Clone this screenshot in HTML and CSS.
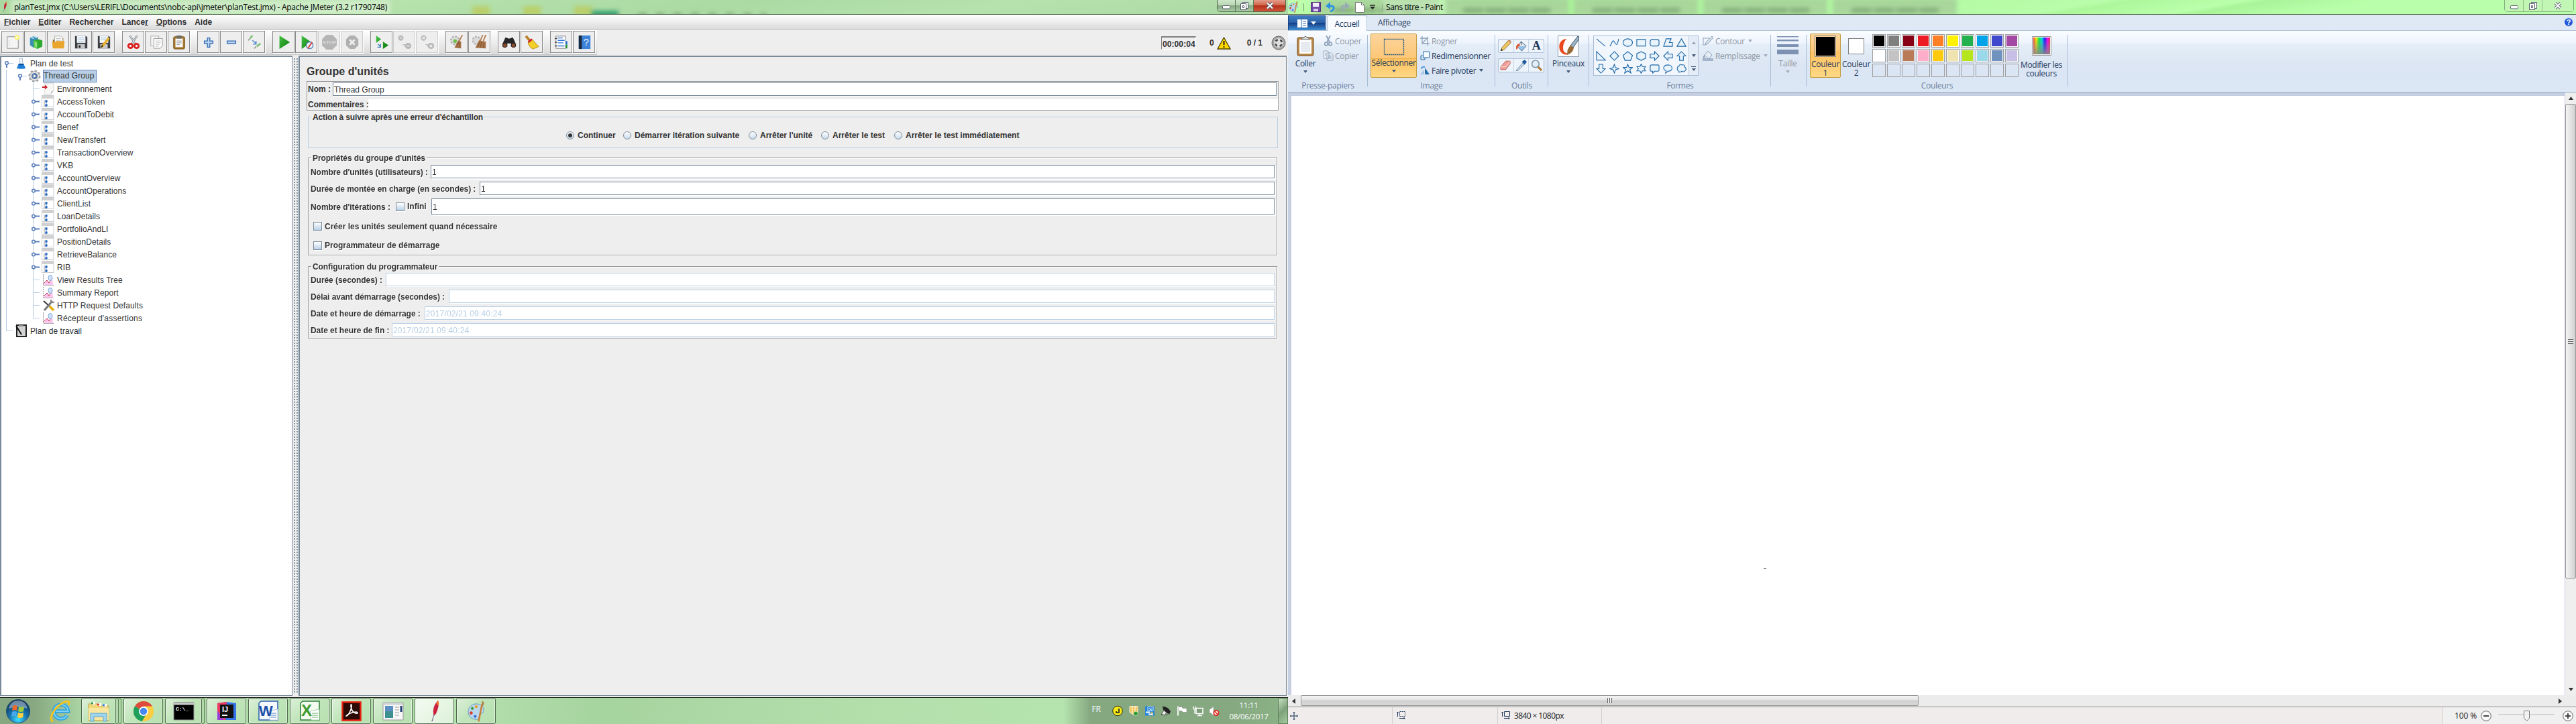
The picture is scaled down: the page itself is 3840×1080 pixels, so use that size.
FILE: index.html
```html
<!DOCTYPE html>
<html lang="fr">
<head>
<meta charset="utf-8">
<title>Apache JMeter / Paint</title>
<link rel="stylesheet" href="styles.css">
</head>
<body>
<svg width="0" height="0" class="defs">
  <defs>
    <linearGradient id="green" x1="0" x2="1" y1="0" y2="1"><stop offset="0" stop-color="#47c247"/><stop offset="1" stop-color="#087a08"/></linearGradient>
    <linearGradient id="hue"><stop offset="0" stop-color="#f33"/><stop offset=".17" stop-color="#fe0"/><stop offset=".35" stop-color="#0e4"/><stop offset=".52" stop-color="#0de"/><stop offset=".68" stop-color="#11f"/><stop offset=".85" stop-color="#f0e"/><stop offset="1" stop-color="#f24"/></linearGradient>
    <linearGradient id="fade" x2="0" y2="1"><stop offset="0" stop-color="#888" stop-opacity="0"/><stop offset="1" stop-color="#888" stop-opacity=".9"/></linearGradient>
    <radialGradient id="orb" cx=".5" cy=".85" r=".8"><stop offset="0" stop-color="#3fe0ff"/><stop offset=".45" stop-color="#1878b4"/><stop offset="1" stop-color="#0d3158"/></radialGradient>
  </defs>
  <symbol id="h-down" viewBox="0 0 20 19"><path d="M11 9.5h7" stroke="#b8cfe5"/><path d="M8 11v5" stroke="#5b7fbd" stroke-width="2"/><circle cx="8" cy="9" r="2.3" fill="#fff" stroke="#5b7fbd" stroke-width="1.6"/></symbol>
  <symbol id="h-right" viewBox="0 0 20 19"><path d="M10 9.5h7" stroke="#5b7fbd" stroke-width="2"/><circle cx="8" cy="9.5" r="2.3" fill="#fff" stroke="#5b7fbd" stroke-width="1.6"/></symbol>
  <symbol id="h-leaf" viewBox="0 0 20 19"><path d="M8 9.500h9" stroke="#b8cfe5"/></symbol>
  <symbol id="t-ctl" viewBox="0 0 20 19"><rect x=".5" y=".5" width="17.500" height="17" fill="#fff" stroke="#c9cdd2"/><path d="M1 3h17" stroke="#d0d0d0" stroke-width="4"/><path d="M4 7v9h2M4 11h2" stroke="#aaa" fill="none"/><circle cx="7" cy="9" r="1.900" fill="#2b6cc4"/><circle cx="7" cy="15" r="1.900" fill="#2b6cc4"/><circle cx="7" cy="12" r="1" fill="#9cc3f0"/></symbol>
  <symbol id="t-graph" viewBox="0 0 20 19"><path d="M2.500 1v16.500H18" stroke="#999" stroke-dasharray="2 1" fill="none"/><path d="M3 17l5-7 4 4 4-6 1 9z" fill="#fbc4ee"/><path d="M3 15l5-5 3 4 5-7" stroke="#c2344c" fill="none"/><ellipse cx="13" cy="6.500" rx="3" ry="4" fill="#cfe2f8" stroke="#7da7dc"/></symbol>
  <symbol id="f-flask" viewBox="0 0 20 19"><path d="M7.500 2h4v5l4 10h-12l4-10z" fill="#eef4fa" stroke="#a9bccd"/><path d="M5.500 11h8l2.500 6q-6 1.500-13 0z" fill="#1f7fd8"/><ellipse cx="9.500" cy="11" rx="4" ry="1.300" fill="#0e4d9a"/></symbol>
  <symbol id="f-gear" viewBox="0 0 20 19"><circle cx="9.500" cy="9.500" r="7.800" fill="none" stroke="#999" stroke-width="2.500" stroke-dasharray="3.300 2.800"/><circle cx="9.500" cy="9.500" r="7" fill="#e3e3e3" stroke="#a6a6a6"/><circle cx="9.500" cy="9.500" r="4.500" fill="#5677a8"/><path d="M8 7l4 2.500-4 2.500z" fill="#fff"/></symbol>
  <symbol id="f-env" viewBox="0 0 20 19"><path d="M4 1h14v11l-4 6H4z" fill="#f7f7f5" stroke="#d5d5d5"/><path d="M14 18q-1-6 4-6z" fill="#c6c6c6"/><path d="M1 7h4" stroke="#cc1f29" stroke-width="2"/><path d="M5 3.500v7L9 7z" fill="#cc1f29"/></symbol>
  <symbol id="f-tools" viewBox="0 0 20 19"><path d="M3 3l9 8" stroke="#333" stroke-width="2"/><path d="M16 3L4 17" stroke="#777" stroke-width="3"/><path d="M12 11l6 6" stroke="#e6b000" stroke-width="3.500"/><path d="M14 1v4h5" stroke="#888" stroke-width="2" fill="none"/></symbol>
  <symbol id="f-bench" viewBox="0 0 20 19"><path d="M3 1h14v17H3z" fill="#d2d2d2" stroke="#222" stroke-width="2"/><path d="M2 2l8 13" stroke="#111" stroke-width="2"/><path d="M6 2h7" stroke="#888" stroke-width="2"/></symbol>
  <symbol id="arr" viewBox="0 0 6 4"><path d="M0 0h6L3 4z" fill="currentColor"/></symbol>
  <symbol id="palette" viewBox="0 0 30 40"><path d="M15 7C5 7 0 15 1 23s9 13 17 11c5-2 1-6 4-9s7-1 6-8S22 7 15 7z" fill="#b9d8ee" stroke="#5a8fb5"/><circle cx="8" cy="15" r="2.500" fill="#3c9c3c"/><circle cx="15" cy="12" r="2.500" fill="#f0a020"/><circle cx="6" cy="23" r="2.800" fill="#d83c30"/><circle cx="13" cy="29" r="2.500" fill="#3c6cd8"/><path d="M25 8l-6 30" stroke="#c97f35" stroke-width="3"/><path d="M24 10l1-9 4 4-2 6z" fill="#b08850"/></symbol>
  <symbol id="feather" viewBox="0 0 20 40"><path d="M16 1q3 9-4 24l-4 2Q5 12 16 1z" fill="#c9213f"/><path d="M16 1q2 5 1 9l-4-3z" fill="#ee7b2a"/><path d="M9 26L5 38" stroke="#5b2a70" stroke-width="1.500" stroke-dasharray="2 1"/></symbol>
</svg>

<div class="desktop">
<div class="left-screen">
  <header class="jm-title">
    <span class="blur-items"><i class="b1"></i><i class="b1"></i><i class="b1"></i><i class="b2"></i><i class="b3"></i></span>
    <svg class="app" viewBox="0 0 20 40" width="12" height="17"><use href="#feather"/></svg>
    <span class="title-text">planTest.jmx (C:\Users\LERIFL\Documents\nobc-api\jmeter\planTest.jmx) - Apache JMeter (3.2 r1790748)</span>
    <span class="winbtns">
      <b class="wb"><svg width="12" height="6"><rect x=".5" y=".5" width="11" height="4.500" rx="1" fill="#fff" stroke="#555b6b"/></svg></b>
      <b class="wb"><svg width="12" height="12"><path d="M3.500.5h8v9h-8z" fill="#fff" stroke="#555b6b"/><path d="M.5 2.500h8v9h-8z" fill="#fff" stroke="#555b6b"/><path d="M3.500 5.500h2v3h-2z" fill="none" stroke="#555b6b"/></svg></b>
      <b class="wb close"><svg width="12" height="11"><path d="M2 1.500l8 8M10 1.500l-8 8" stroke="#555b6b" stroke-width="4"/><path d="M2 1.500l8 8M10 1.500l-8 8" stroke="#fff" stroke-width="2.200"/></svg></b>
    </span>
  </header>
  <nav class="menubar">
    <span><u>F</u>ichier</span><span><u>E</u>diter</span><span>Rechercher</span><span>Lance<u>r</u></span><span><u>O</u>ptions</span><span>Aide</span>
  </nav>
  <div class="toolbar">
    <div class="tools">
      <div class="tgroup">
        <button><svg viewBox="0 0 24 24"><path d="M3 3h18v19H3z" fill="#f4f4f4" stroke="#888"/><path d="M6 8v10" stroke="#bbb" stroke-dasharray="2 2"/><circle cx="19" cy="4" r="4" fill="#fdf27a"/><circle cx="19" cy="4" r="1.500" fill="#fff"/></svg></button>
        <button><svg viewBox="0 0 24 24"><path d="M3 5l6-3 7 2v15l-7 2-6-4z" fill="#3b8fb5"/><path d="M4 3l5 3M9 2l5 3" stroke="#c3e3ee" stroke-width="2"/><path d="M9 9l8-2 6 2v10l-8 4-6-3z" fill="#2ea82e"/><path d="M9 9l6 2v12l-6-3z" fill="#5fd04a"/><path d="M11 13l2 1v5" stroke="#fff" fill="none"/></svg></button>
        <button><svg viewBox="0 0 24 24"><path d="M3 8h4l1-3h12v14H3z" fill="#a8720c"/><path d="M6 2h10l3 3v11H6z" fill="#fafafa" stroke="#aaa"/><path d="M8 6h8M8 9h8" stroke="#bbb"/><path d="M2 12h5l1-2h14l-1 12H3z" fill="#e9a52c"/></svg></button>
        <button><svg viewBox="0 0 24 24"><path d="M2 2h18l2 2v18H2z" fill="#3b3f44"/><path d="M5 2h14v11H5z" fill="#f2f5f8"/><path d="M7 5h10M7 8h10M7 11h10" stroke="#9dc0df"/><path d="M6 15h12v7H6z" fill="#c6c8ca"/><path d="M8 17h3v4H8z" fill="#222"/></svg></button>
        <button><svg viewBox="0 0 24 24"><path d="M2 2h18l2 2v18H2z" fill="#3b3f44"/><path d="M5 2h14v11H5z" fill="#f2f5f8"/><path d="M7 5h10M7 8h10" stroke="#9dc0df"/><path d="M6 15h12v7H6z" fill="#c6c8ca"/><path d="M20 5L8 20" stroke="#e9b32b" stroke-width="4"/><path d="M9 16l-3 6 5-4z" fill="#222"/></svg></button>
      </div>
      <div class="tgroup">
        <button><svg viewBox="0 0 24 24"><path d="M6 1l9 14M18 1L9 15" stroke="#8d9297" stroke-width="3"/><path d="M6 1l9 14M18 1L9 15" stroke="#eee" stroke-width="1"/><circle cx="7" cy="18" r="3.500" fill="none" stroke="#dc1c1c" stroke-width="3"/><circle cx="17" cy="18" r="3.500" fill="none" stroke="#dc1c1c" stroke-width="3"/></svg></button>
        <button><svg viewBox="0 0 24 24"><path d="M3 2h13v16H3z" fill="#f5f5f5" stroke="#aaa"/><path d="M8 6h14v12l-4 4H8z" fill="#fafafa" stroke="#999"/><path d="M11 10h8M11 13h8M11 16h6M11 19h4" stroke="#c5c5c5"/></svg></button>
        <button><svg viewBox="0 0 24 24"><rect x="3" y="3" width="18" height="20" rx="2" fill="#a8782f" stroke="#6e4a10"/><path d="M6 6h12v14H6z" fill="#fafafa"/><path d="M8 10h8M8 13h8M8 16h5" stroke="#888"/><path d="M8 1h8v5H8z" fill="#6b6d66"/></svg></button>
      </div>
      <div class="tgroup">
        <button><svg viewBox="0 0 24 24"><path d="M10 5h4v5h5v4h-5v6h-4v-6H5v-4h5z" fill="#b9d3f2" stroke="#2f66ae" stroke-width="1.400"/></svg></button>
        <button><svg viewBox="0 0 24 24"><path d="M5 10h14v4H5z" fill="#b9d3f2" stroke="#2f66ae" stroke-width="1.400"/></svg></button>
        <button><svg viewBox="0 0 24 24"><path d="M2 9l3-3M12 22l3-3" stroke="#888" stroke-width="1.500"/><path d="M5 6l4-5M16 19l6-5" stroke="#83c27a" stroke-width="3"/><path d="M9 9l6 5M15 10v5h-5" stroke="#4a86d0" stroke-width="1.500" fill="none"/></svg></button>
      </div>
      <div class="tgroup">
        <button><svg viewBox="0 0 24 24"><path d="M5 1l17 11L5 23z" fill="url(#green)"/></svg></button>
        <button><svg viewBox="0 0 24 24"><path d="M4 1l16 11L4 23z" fill="url(#green)"/><circle cx="17" cy="17" r="5.500" fill="#e8f0f8" stroke="#5580b4" stroke-width="1.500"/><path d="M14 22l7-10" stroke="#d33" stroke-width="2"/></svg></button>
        <button class="off"><svg viewBox="0 0 24 24"><path d="M7 0h10l7 7v10l-7 7H7l-7-7V7z" fill="#b5b5b5"/><text x="12" y="15.500" text-anchor="middle" font-size="8.500" font-weight="bold" fill="#d8d8d8">STOP</text></svg></button>
        <button class="off"><svg viewBox="0 0 24 24"><path d="M8 1h8l6 6v10l-6 6H8l-6-6V7z" fill="#b0b0b0"/><path d="M8 8l8 8M16 8l-8 8" stroke="#eee" stroke-width="3"/></svg></button>
      </div>
      <div class="tgroup">
        <button><svg viewBox="0 0 24 24"><path d="M3 1l8 6-8 6zM14 11l9 6-9 6z" fill="url(#green)"/><path d="M6 15l4 4M10 15v5H5" stroke="#3a78b8" stroke-width="1.500" fill="none"/></svg></button>
        <button class="off"><svg viewBox="0 0 24 24"><circle cx="6" cy="5" r="4.500" fill="#bbb"/><circle cx="18" cy="18" r="5" fill="#b5b5b5"/><path d="M4 5h4M15 18h6" stroke="#ddd" stroke-width="2"/><path d="M9 16h4v4" stroke="#aaa" fill="none"/></svg></button>
        <button class="off"><svg viewBox="0 0 24 24"><circle cx="6" cy="5" r="4.500" fill="#bbb"/><circle cx="18" cy="18" r="5" fill="#b5b5b5"/><path d="M4 3l4 4M8 3L4 7M16 16l4 4M20 16l-4 4" stroke="#eee" stroke-width="1.500"/><path d="M9 16h4v4" stroke="#aaa" fill="none"/></svg></button>
      </div>
      <div class="tgroup">
        <button><svg viewBox="0 0 24 24"><circle cx="9" cy="9" r="6.500" fill="#ddd" stroke="#b5b5b5" stroke-width="3" stroke-dasharray="3 2"/><circle cx="9" cy="10" r="3" fill="#6cc04a"/><path d="M21 0l-5 10" stroke="#b58055" stroke-width="2"/><path d="M14 9l5 2v11l-11-1z" fill="#a9754a"/><path d="M15 12l-3 9M17 12l-1 9" stroke="#7b4d28"/></svg></button>
        <button><svg viewBox="0 0 24 24"><circle cx="7" cy="9" r="6" fill="#ddd" stroke="#b5b5b5" stroke-width="3" stroke-dasharray="3 2"/><path d="M17 0l-4 10M22 0l-4 10" stroke="#b58055" stroke-width="2"/><path d="M11 9l11 2v11l-17-1z" fill="#a9754a"/><path d="M12 12l-4 9M15 12l-2 9M19 12l-1 9" stroke="#7b4d28"/></svg></button>
      </div>
      <div class="tgroup">
        <button><svg viewBox="0 0 24 24"><path d="M6 4l5 2h2l5-2 5 11v4h-8v-5h-6v5H1v-4z" fill="#262626"/><circle cx="5" cy="17" r="3.500" fill="#8b4a28" stroke="#222"/><circle cx="19" cy="17" r="3.500" fill="#8b4a28" stroke="#222"/></svg></button>
        <button><svg viewBox="0 0 24 24"><path d="M2 2l8 9" stroke="#b9822b" stroke-width="4"/><path d="M6 12l6-5 11 12-9 4q-8-3-8-11z" fill="#f3cf2a" stroke="#b88b10"/><path d="M6 12l6-5" stroke="#d3202a" stroke-width="3"/></svg></button>
      </div>
      <div class="tgroup">
        <button><svg viewBox="0 0 24 24"><path d="M3 2h16v20H3z" fill="#fff" stroke="#777"/><path d="M6 5h8M6 9h11M6 13h9M6 18h11" stroke="#2b70d8" stroke-width="1.500"/><path d="M1 6h4M1 12h4M1 18h4" stroke="#444" stroke-width="1.500"/><path d="M20 10v6" stroke="#2a70c9" stroke-width="3"/><path d="M20 16v6" stroke="#24913a" stroke-width="3"/></svg></button>
        <button><svg viewBox="0 0 24 24"><path d="M3 1h19v22H3z" fill="#3c82d9"/><path d="M3 1h5v22H3z" fill="#1b2a3c"/><text x="15" y="17" text-anchor="middle" font-size="16" fill="#e5effa">?</text></svg></button>
      </div>
    </div>
    <div class="run-status">
      <span class="timer">00:00:04</span>
      <span class="errs">0<svg width="21" height="19" viewBox="0 0 21 19"><path d="M10.500 1L20 18H1z" fill="#ffd800" stroke="#4d4200" stroke-width="1.300"/><path d="M10.500 6v6M10.500 14v2" stroke="#222" stroke-width="2"/></svg></span>
      <span class="threads">0 / 1</span>
      <svg width="22" height="22" viewBox="0 0 22 22"><circle cx="11" cy="11" r="10" fill="#a5a5a5" stroke="#666"/><circle cx="11" cy="11" r="7" fill="#dedede"/><circle cx="11" cy="11" r="5" fill="none" stroke="#444" stroke-width="2.600" stroke-dasharray="4 3.850" stroke-dashoffset="-2"/></svg>
    </div>
  </div>

  <div class="workarea">
    <aside class="tree">
      <div class="row"><svg><use href="#h-down"/></svg><svg><use href="#f-flask"/></svg><span>Plan de test</span></div>
      <div class="lvl1">
        <div class="row"><svg><use href="#h-down"/></svg><svg><use href="#f-gear"/></svg><span class="sel">Thread Group</span></div>
        <div class="lvl2">
          <div class="row"><svg><use href="#h-leaf"/></svg><svg><use href="#f-env"/></svg><span>Environnement</span></div>
          <div class="row"><svg><use href="#h-right"/></svg><svg><use href="#t-ctl"/></svg><span>AccessToken</span></div>
          <div class="row"><svg><use href="#h-right"/></svg><svg><use href="#t-ctl"/></svg><span>AccountToDebit</span></div>
          <div class="row"><svg><use href="#h-right"/></svg><svg><use href="#t-ctl"/></svg><span>Benef</span></div>
          <div class="row"><svg><use href="#h-right"/></svg><svg><use href="#t-ctl"/></svg><span>NewTransfert</span></div>
          <div class="row"><svg><use href="#h-right"/></svg><svg><use href="#t-ctl"/></svg><span>TransactionOverview</span></div>
          <div class="row"><svg><use href="#h-right"/></svg><svg><use href="#t-ctl"/></svg><span>VKB</span></div>
          <div class="row"><svg><use href="#h-right"/></svg><svg><use href="#t-ctl"/></svg><span>AccountOverview</span></div>
          <div class="row"><svg><use href="#h-right"/></svg><svg><use href="#t-ctl"/></svg><span>AccountOperations</span></div>
          <div class="row"><svg><use href="#h-right"/></svg><svg><use href="#t-ctl"/></svg><span>ClientList</span></div>
          <div class="row"><svg><use href="#h-right"/></svg><svg><use href="#t-ctl"/></svg><span>LoanDetails</span></div>
          <div class="row"><svg><use href="#h-right"/></svg><svg><use href="#t-ctl"/></svg><span>PortfolioAndLI</span></div>
          <div class="row"><svg><use href="#h-right"/></svg><svg><use href="#t-ctl"/></svg><span>PositionDetails</span></div>
          <div class="row"><svg><use href="#h-right"/></svg><svg><use href="#t-ctl"/></svg><span>RetrieveBalance</span></div>
          <div class="row"><svg><use href="#h-right"/></svg><svg><use href="#t-ctl"/></svg><span>RIB</span></div>
          <div class="row"><svg><use href="#h-leaf"/></svg><svg><use href="#t-graph"/></svg><span>View Results Tree</span></div>
          <div class="row"><svg><use href="#h-leaf"/></svg><svg><use href="#t-graph"/></svg><span>Summary Report</span></div>
          <div class="row"><svg><use href="#h-leaf"/></svg><svg><use href="#f-tools"/></svg><span>HTTP Request Defaults</span></div>
          <div class="row airy"><svg><use href="#h-leaf"/></svg><svg><use href="#t-graph"/></svg><span>Récepteur d'assertions</span></div>
        </div>
      </div>
      <div class="row"><svg><use href="#h-leaf"/></svg><svg><use href="#f-bench"/></svg><span>Plan de travail</span></div>
    </aside>
    <div class="splitter"></div>
    <main class="panel">
      <h1>Groupe d'unités</h1>
      <div class="namebox">
        <div class="nrow"><label class="l-nom">Nom :</label><div class="field">Thread Group</div></div>
        <div class="crow"><label>Commentaires :</label><div class="plain"></div></div>
      </div>
      <fieldset class="action">
        <legend>Action à suivre après une erreur d'échantillon</legend>
        <div class="radios">
          <span class="r1"><i class="on"></i>Continuer</span><span class="r2"><i></i>Démarrer itération suivante</span><span class="r3"><i></i>Arrêter l'unité</span><span class="r4"><i></i>Arrêter le test</span><span><i></i>Arrêter le test immédiatement</span>
        </div>
      </fieldset>
      <fieldset class="props">
        <legend>Propriétés du groupe d'unités</legend>
        <div class="frow"><label class="l-users">Nombre d'unités (utilisateurs) :</label><div class="field">1</div></div>
        <div class="frow"><label class="l-ramp">Durée de montée en charge (en secondes) :</label><div class="field">1</div></div>
        <div class="frow tall"><label class="l-loop">Nombre d'itérations :</label><span class="chk inf"><i></i>Infini</span><div class="field">1</div></div>
        <div class="chk delay"><i></i>Créer les unités seulement quand nécessaire</div>
        <div class="chk sched"><i></i>Programmateur de démarrage</div>
      </fieldset>
      <fieldset class="config">
        <legend>Configuration du programmateur</legend>
        <div class="frow"><label class="l-dur">Durée (secondes) :</label><div class="field dis"></div></div>
        <div class="frow"><label class="l-del">Délai avant démarrage (secondes) :</label><div class="field dis"></div></div>
        <div class="frow"><label class="l-start">Date et heure de démarrage :</label><div class="field dis">2017/02/21 09:40:24</div></div>
        <div class="frow"><label class="l-end">Date et heure de fin :</label><div class="field dis">2017/02/21 09:40:24</div></div>
      </fieldset>
    </main>
  </div>

  <footer class="taskbar">
    <svg class="start-orb" width="38" height="38" viewBox="0 0 38 38"><circle cx="19" cy="19" r="17.500" fill="url(#orb)" stroke="#27516e"/><path d="M5 15Q8 3 19 3t14 12Q19 10 5 15z" fill="#fff" opacity=".4"/><path d="M11 11q4-2 7 0l-1 7q-4-2-7 0z" fill="#ee6a2b"/><path d="M20 12q4 2 8 0l-1 7q-4 2-8 0z" fill="#9dcc3c"/><path d="M10 20q4-2 7 0l-1 7q-4-2-7 0z" fill="#48a8ea"/><path d="M19 21q4 2 8 0l-1 7q-4 2-8 0z" fill="#fbd03b"/></svg>
    <svg class="ie" width="34" height="34" viewBox="0 0 34 34"><path d="M27 23a10.500 10.500 0 1 1 1.500-6H10" fill="none" stroke="#2fa4e2" stroke-width="5.500"/><path d="M27 23a10.500 10.500 0 1 1 1.500-6H10" fill="none" stroke="#7dd2f7" stroke-width="2"/><path d="M6 32C-2 30 8 12 18 6s14-5 11 2" fill="none" stroke="#f4c41f" stroke-width="2.800"/></svg>
    <span class="tb explorer"><svg width="34" height="34" viewBox="0 0 34 34"><path d="M2 6h14v3h16v22H2z" fill="#f2d777" stroke="#c9a545"/><path d="M6 3h6v4H6zM15 5h6v4h-6zM23 6h6v4h-6z" fill="#fff"/><path d="M6 5h3" stroke="#2f9b46" stroke-width="3"/><path d="M15 7h3" stroke="#d8402c" stroke-width="3"/><path d="M23 8h3" stroke="#2f7bd0" stroke-width="3"/><path d="M2 12h30v18H2z" fill="#f8e6a0"/><path d="M5 32V20h24v12h-5v-7H10v7z" fill="#9fd4ee" stroke="#5ca6cc"/></svg></span><span class="stack"></span><span class="stack end"></span>
    <span class="tb"><svg width="32" height="32" viewBox="0 0 32 32"><circle cx="16" cy="16" r="15" fill="#fcc934"/><path d="M16 16L3 8.500A15 15 0 0 1 29 8.500H16z" fill="#dd4b3e"/><path d="M3 8.500A15 15 0 0 0 14 31l7-12-5-3z" fill="#1fa15d"/><path d="M16 9h13q4 12-6 20-4 2-9 2l7-12z" fill="#fccd43"/><circle cx="16" cy="16" r="7" fill="#fff"/><circle cx="16" cy="16" r="5.300" fill="#4688f1"/></svg></span>
    <span class="tb cmd"><svg width="32" height="28" viewBox="0 0 32 28"><path d="M1 1h30v26H1z" fill="#000" stroke="#999"/><path d="M1 3h30" stroke="#ccc" stroke-width="3"/><text x="4" y="13" font-size="8" fill="#fff" class="mono">C:\_</text></svg></span><span class="stack end"></span>
    <span class="tb"><svg width="30" height="30" viewBox="0 0 30 30"><path d="M1 3l14-2 14 2v25H1z" fill="#3573e8"/><path d="M1 3l14-2-2 27H1z" fill="#ec3a64"/><path d="M1 14l10 14H1z" fill="#9a40d8"/><path d="M5 5h20v20H5z" fill="#111"/><text x="8" y="16" font-size="11" font-weight="bold" fill="#fff">IJ</text><path d="M8 21h8" stroke="#fff" stroke-width="2"/></svg></span>
    <span class="tb"><svg width="30" height="32" viewBox="0 0 30 32"><path d="M4 1h25v28H1V4z" fill="#f5f9ff" stroke="#2b5fb0" stroke-width="1.500"/><path d="M15 16l14-3v16H17z" fill="#fff" stroke="#b5c8e0"/><path d="M18 19h9M18 22h9M18 25h9" stroke="#4a7cc0"/><text x="1" y="23" font-size="22" font-weight="bold" fill="#1c50a8">W</text></svg></span>
    <span class="tb"><svg width="30" height="32" viewBox="0 0 30 32"><path d="M4 1h25v28H1V4z" fill="#f3fbf1" stroke="#2e7d3a" stroke-width="1.500"/><path d="M15 16l14-3v16H17z" fill="#fff" stroke="#a9cfa9"/><path d="M18 19h9M18 22h9M18 25h9" stroke="#6fae6f"/><text x="2" y="23" font-size="24" font-weight="bold" fill="#3d9a2e">X</text></svg></span>
    <span class="tb"><svg width="30" height="30" viewBox="0 0 30 30"><path d="M1.500 1.500h27v27h-27z" fill="#2a0b08" stroke="#e8200e" stroke-width="2.500"/><path d="M7 22c3 1 9-12 8-16s-2 3 1 8 9 5 8 3-11-1-17 5z" fill="none" stroke="#fff" stroke-width="1.600"/></svg></span>
    <span class="tb"><svg width="32" height="28" viewBox="0 0 32 28"><path d="M1 1h30v26H1z" fill="#f6f6f6" stroke="#999"/><path d="M1 3h30" stroke="#cfd3d6" stroke-width="3"/><path d="M4 6h12v18H4z" fill="#3e8f8f"/><path d="M4 6h12v8H4z" fill="#5b8fc4"/><path d="M19 8h6M19 12h6M19 16h6M19 20h6" stroke="#bbb" stroke-width="1.500"/><path d="M28 6v9" stroke="#26457a" stroke-width="3"/></svg></span>
    <span class="tb act"><svg width="20" height="34"><use href="#feather"/></svg></span>
    <span class="tb"><svg width="32" height="34"><use href="#palette"/></svg></span>
    <div class="tray">
      <span class="lang">FR</span>
      <span class="ticons">
        <svg viewBox="0 0 16 16"><circle cx="8" cy="8" r="7.300" fill="#f6ea14" stroke="#222"/><path d="M10 4.500v6H6V8.500" stroke="#222" stroke-width="1.700" fill="none"/></svg>
        <svg viewBox="0 0 16 16"><path d="M2 1h12v9l-6 4-6-4z" fill="#f3c659" stroke="#fff" stroke-width=".8"/><path d="M6 1v11M10 1v8" stroke="#fff"/><circle cx="11" cy="12" r="3.300" fill="#2f9b2f" stroke="#e5f5e0" stroke-width=".6"/></svg>
        <svg viewBox="0 0 16 16"><path d="M1 1h14v14H1z" fill="#2484da"/><path d="M5 2h8v6H5z" fill="#2484da" stroke="#d3e8fa"/><path d="M7 4l4 3M11 4L8 7" stroke="#fff"/><path d="M2 10h6M6 13h7" stroke="#fff" stroke-width="2"/><path d="M9 11h4" stroke="#ecc93d" stroke-width="2"/></svg>
        <svg viewBox="0 0 16 16"><path d="M3 1q9 1 12 8l-2 4-5-3-4-4z" fill="#222"/><path d="M1 14l4-7 4 4 1 3-3-2-1 3-2-2z" fill="#f5f5f5" stroke="#333" stroke-width=".8"/></svg>
        <svg viewBox="0 0 16 16"><path d="M2 1v14" stroke="#fff" stroke-width="1.800"/><path d="M3 2h5l1 2h6v6H9L8 8H3z" fill="#fff" stroke="#777" stroke-width=".5"/></svg>
        <svg viewBox="0 0 16 16"><path d="M5 4h10v8H5z" fill="#7d9f78" stroke="#fff" stroke-width="1.500"/><path d="M10 12v2.500M7 15h7M1 1v4h3.500V1M3 5v7" stroke="#fff" stroke-width="1.300" fill="none"/></svg>
        <svg viewBox="0 0 16 16"><path d="M1 5h2l4-4v14l-4-4H1z" fill="#fff" stroke="#888" stroke-width=".5"/><circle cx="11" cy="11" r="3.600" fill="#fff" stroke="#e2231a" stroke-width="1.800"/><path d="M8.500 8.500l5 5" stroke="#e2231a" stroke-width="1.600"/></svg>
      </span>
      <span class="clock"><span>11:11</span><span>08/06/2017</span></span>
      <span class="peek"></span>
    </div>
  </footer>
</div>

<div class="paint">
  <header class="p-title">
    <div class="ghost-tabs"><i><s></s></i><i><s></s></i><i><s></s></i><i><s></s></i><i><s></s></i></div>
    <svg width="16" height="19"><use href="#palette"/></svg>
    <i class="bar d1"></i>
    <svg class="q1" width="15" height="15" viewBox="0 0 15 15"><path d="M.5.5h14v14H.5z" fill="#7648a8" stroke="#52307c"/><path d="M3 1h9v6H3z" fill="#f3effa"/><path d="M4 10h7v4H4z" fill="#dcd0ea"/></svg>
    <svg class="q2" width="15" height="15" viewBox="0 0 15 15"><path d="M3 6h5q5 0 4 4-1 3-5 4" fill="none" stroke="#2d93e0" stroke-width="2.800"/><path d="M7 0v11L0 6z" fill="#2d93e0"/></svg>
    <svg class="q3" width="15" height="15" viewBox="0 0 15 15"><path d="M12 6H7q-5 0-4 4 1 3 5 4" fill="none" stroke="#98a9b5" stroke-width="2.800"/><path d="M8 0v11l7-5z" fill="#98a9b5"/></svg>
    <svg class="q4" width="14" height="16" viewBox="0 0 14 16"><path d="M.5.5h9l4 4v11H.5z" fill="#fff" stroke="#777"/><path d="M9.500.5v4h4" fill="none" stroke="#777"/></svg>
    <svg class="q5" width="8" height="7" viewBox="0 0 8 7"><path d="M0 1h8" stroke="#222" stroke-width="1.500"/><path d="M0 3h8L4 7z" fill="#222"/></svg>
    <i class="bar d2"></i>
    <span class="p-name">Sans titre - Paint</span>
    <span class="winbtns glass">
      <b class="wb"><svg width="12" height="6"><rect x=".5" y=".5" width="11" height="4.500" rx="1" fill="#fff" stroke="#555b6b"/></svg></b>
      <b class="wb"><svg width="12" height="12"><path d="M3.500.5h8v9h-8z" fill="#fff" stroke="#555b6b"/><path d="M.5 2.500h8v9h-8z" fill="#fff" stroke="#555b6b"/><path d="M3.500 5.500h2v3h-2z" fill="none" stroke="#555b6b"/></svg></b>
      <b class="wb close"><svg width="12" height="11"><path d="M2 1.500l8 8M10 1.500l-8 8" stroke="#555b6b" stroke-width="4"/><path d="M2 1.500l8 8M10 1.500l-8 8" stroke="#fff" stroke-width="2.200"/></svg></b>
    </span>
  </header>
  <nav class="tabs">
    <span class="filetab"><svg width="15" height="12" viewBox="0 0 15 12"><path d="M0 0h15v12H0z" fill="#fff"/><path d="M6 0v12" stroke="#2f67ae"/><path d="M8 3h5M8 6h5M8 9h5" stroke="#2f67ae"/></svg><svg width="8" height="5"><path d="M0 0h8L4 5z" fill="#fff"/></svg></span>
    <span class="tab">Accueil</span><span class="tab2">Affichage</span>
    <svg class="help" width="14" height="14" viewBox="0 0 14 14"><circle cx="7" cy="7" r="6.300" fill="#1d55d8" stroke="#cfdcf2"/><text x="7" y="11" text-anchor="middle" font-size="11" font-weight="bold" fill="#fff">?</text></svg>
  </nav>
  <div class="ribbon">
    <section class="g1">
      <div class="gbody">
        <div class="big w52"><svg width="26" height="31" viewBox="0 0 26 31"><rect x="1" y="3" width="24" height="27" rx="2" fill="#b98545" stroke="#7a4f1c"/><path d="M4 6h18v21H4z" fill="#fff"/><path d="M6 11h14M6 14h14M6 17h14M6 20h14M6 23h14" stroke="#bcc8d6"/><path d="M7 6q1-3 4-3 2-4 4 0 3 0 4 3z" fill="#ddd" stroke="#666"/></svg><span>Coller</span><svg class="ar"><use href="#arr"/></svg></div>
        <div class="list clip">
          <div class="li dim"><svg width="16" height="16" viewBox="0 0 16 16"><path d="M5 0l5 10M11 0L6 10" stroke="#93a6bd" stroke-width="2"/><circle cx="5" cy="12.500" r="2.300" fill="none" stroke="#93a6bd" stroke-width="1.800"/><circle cx="11" cy="12.500" r="2.300" fill="none" stroke="#93a6bd" stroke-width="1.800"/></svg><span>Couper</span></div>
          <div class="li dim"><svg width="16" height="16" viewBox="0 0 16 16"><path d="M1 1h6l2 2v9H1zM6 4h6l3 3v8H6z" fill="#e9eff7" stroke="#93a6bd"/><path d="M8 8h4M8 10h5M8 12h5M3 5h2M3 7h2" stroke="#93a6bd"/></svg><span>Copier</span></div>
        </div>
      </div>
      <h2>Presse-papiers</h2>
    </section>
    <section class="g2">
      <div class="gbody">
        <div class="big sel69"><svg width="32" height="26" viewBox="0 0 32 26"><path d="M1.500 1.500h29v23h-29z" fill="none" stroke="#1c5580" stroke-dasharray="2 1" stroke-width="1.300"/></svg><span>Sélectionner</span><svg class="ar"><use href="#arr"/></svg></div>
        <div class="list">
          <div class="li dim"><svg width="14" height="14" viewBox="0 0 14 14"><path d="M3 0v11h11M0 3h11v11M3 11l9-10" fill="none" stroke="#8fa2b8" stroke-width="1.300"/></svg><span>Rogner</span></div>
          <div class="li"><svg width="14" height="14" viewBox="0 0 14 14"><path d="M1 7h6v6H1z" fill="#cfe3f5" stroke="#2b6aa3"/><path d="M4.500 1h9v9h-9z" fill="#f5faff" stroke="#2b6aa3"/></svg><span>Redimensionner</span></div>
          <div class="li"><svg width="14" height="14" viewBox="0 0 14 14"><path d="M0 13h6V6z" fill="#a8c7e2"/><path d="M7 13V3l7 10z" fill="#2670a8"/><path d="M2 5q0-4 5-3" fill="none" stroke="#2b8ae0" stroke-width="1.500"/></svg><span>Faire pivoter</span><svg class="ar"><use href="#arr"/></svg></div>
        </div>
      </div>
      <h2>Image</h2>
    </section>
    <section class="g3">
      <div class="gbody">
        <div class="tbox">
          <b><svg viewBox="0 0 16 16"><path d="M15 1l-3-1L3 10l-2 5 5-2L15 4z" fill="#f0c75c" stroke="#806030" stroke-width=".8"/><path d="M12 0l3 1v3l-3-2z" fill="#d88b84"/><path d="M1 15l1-3 2 2z" fill="#222"/></svg></b>
          <b><svg viewBox="0 0 16 16"><path d="M8 2l7 6-6 7-6-6z" fill="#e5eef6" stroke="#6b8298"/><path d="M5 5Q0 6 1 13l2-1q0-4 4-4z" fill="#e4502a"/><path d="M8 2v5" stroke="#555"/><path d="M4 9l10-1-5 6z" fill="#8fc1e8"/></svg></b>
          <b><em>A</em></b>
        </div>
        <div class="tbox">
          <b><svg viewBox="0 0 16 16"><path d="M8 2h7l-1 4-6 8H1V10z" fill="#ee9d97" stroke="#b0554e" stroke-width=".8"/><path d="M1 10h7l7-8" fill="none" stroke="#fbd5d2"/></svg></b>
          <b><svg viewBox="0 0 16 16"><path d="M10 5L2 14l-1 2 3-1 8-8z" fill="#cfe1ef" stroke="#58788f" stroke-width=".8"/><path d="M9 3l4 4 3-4-3-3z" fill="#1c5a9c"/></svg></b>
          <b><svg viewBox="0 0 16 16"><path d="M10 10l5 5" stroke="#b07a35" stroke-width="3"/><circle cx="6.500" cy="6" r="5" fill="#e2effa" stroke="#8295a8" stroke-width="1.500"/></svg></b>
        </div>
      </div>
      <h2>Outils</h2>
    </section>
    <section class="g4">
      <div class="gbody"><div class="big w60"><svg width="32" height="32" viewBox="0 0 32 32"><path d="M.5.5h31v31H.5z" fill="#fdfdfd" stroke="#8a99a8"/><path d="M13 5C2 6 0 17 5 25q6 6 13 2-10 0-10-8T13 5z" fill="#e8481c"/><path d="M30 1l2 4-9 13-4-3z" fill="#9bb4c8" stroke="#40596b"/><path d="M19 15l5 3q-1 8-10 11 0-10 5-14z" fill="#9a6a33"/></svg><span>Pinceaux</span><svg class="ar"><use href="#arr"/></svg></div></div>
    </section>
    <section class="g5">
      <div class="gbody">
        <div class="shapes">
          <div class="grid">
            <svg viewBox="0 0 16 16"><path d="M1 2l14 12"/></svg>
            <svg viewBox="0 0 16 16"><path d="M1 14C5 8 5 2 8 7s4 8 7-5" fill="none"/></svg>
            <svg viewBox="0 0 16 16"><ellipse cx="8" cy="8" rx="7.500" ry="6"/></svg>
            <svg viewBox="0 0 16 16"><path d="M1 3h14v10.500H1z"/></svg>
            <svg viewBox="0 0 16 16"><rect x="1" y="3" width="14" height="10.500" rx="3"/></svg>
            <svg viewBox="0 0 16 16"><path d="M5 2h8l-3 6h5v6H1z"/></svg>
            <svg viewBox="0 0 16 16"><path d="M8 2l7 12H1z"/></svg>
            <svg viewBox="0 0 16 16"><path d="M1 1l14 13.500H1z"/></svg>
            <svg viewBox="0 0 16 16"><path d="M8 1l7 7-7 7-7-7z"/></svg>
            <svg viewBox="0 0 16 16"><path d="M8 1l7.500 6-3 8h-9l-3-8z"/></svg>
            <svg viewBox="0 0 16 16"><path d="M8 1l7 3.500v7L8 15l-7-3.500v-7z"/></svg>
            <svg viewBox="0 0 16 16"><path d="M1 5h7V1l7 7-7 7v-4H1z"/></svg>
            <svg viewBox="0 0 16 16"><path d="M15 5H8V1L1 8l7 7v-4h7z"/></svg>
            <svg viewBox="0 0 16 16"><path d="M5 15V8H1l7-7 7 7h-4v7z"/></svg>
            <svg viewBox="0 0 16 16"><path d="M5 1v7H1l7 7 7-7h-4V1z"/></svg>
            <svg viewBox="0 0 16 16"><path d="M8 1l1.800 5.200L15 8 9.800 9.800 8 15 6.200 9.800 1 8l5.200-1.800z"/></svg>
            <svg viewBox="0 0 16 16"><path d="M8 1l2 5h5.500l-4.200 3.500L13 15l-5-3.500L3 15l1.700-5.500L.5 6H6z"/></svg>
            <svg viewBox="0 0 16 16"><path d="M8 .5l2 4h5L12.500 8l2.500 3.500h-5l-2 4-2-4H1L3.500 8 1 4.500h5z"/></svg>
            <svg viewBox="0 0 16 16"><path d="M3 2h10q2 0 2 2v6q0 2-2 2H8l-3 3v-3H3q-2 0-2-2V4q0-2 2-2z"/></svg>
            <svg viewBox="0 0 16 16"><path d="M5 11.500C-1 9 0 2 8 2s9 10 0 10l-4 3z"/></svg>
            <svg viewBox="0 0 16 16"><path d="M4 4q1-4 5-2 5-1 4 3 4 3 1 6-2 3-6 1-1 2-4 1v1-2Q0 10 2 7q-1-2 2-3z"/></svg>
          </div>
          <div class="sc"><b class="dm"><svg class="ar up"><use href="#arr"/></svg></b><b><svg class="ar"><use href="#arr"/></svg></b><b class="more"><svg class="ar"><use href="#arr"/></svg></b></div>
        </div>
        <div class="list outl">
          <div class="li dim"><svg width="16" height="16" viewBox="0 0 16 16"><path d="M1 4h9M1 3v11h3" fill="none" stroke="#8fa2b8"/><path d="M14 1L5 10l-1 4 4-2 8-9z" fill="#d5dfea" stroke="#8fa2b8"/></svg><span>Contour</span><svg class="ar"><use href="#arr"/></svg></div>
          <div class="li dim"><svg width="16" height="16" viewBox="0 0 16 16"><path d="M0 12h16v4H0z" fill="#a3b3ca"/><path d="M8 1l6 6-5 6-6-6z" fill="#e7edf5" stroke="#8fa2b8"/><path d="M4 6Q0 8 1 12h2z" fill="#8fa2b8"/></svg><span>Remplissage</span><svg class="ar"><use href="#arr"/></svg></div>
        </div>
      </div>
      <h2>Formes</h2>
    </section>
    <section class="g6">
      <div class="gbody"><div class="big w50 dim"><svg width="32" height="28" viewBox="0 0 32 28"><path d="M0 0h32v1.500H0zM0 5h32v2.500H0zM0 12h32v4H0zM0 20h32v7H0z" fill="#7d91b2"/></svg><span>Taille</span><svg class="ar"><use href="#arr"/></svg></div></div>
    </section>
    <section class="g7">
      <div class="gbody">
        <div class="col c1"><i></i><span>Couleur<br>1</span></div>
        <div class="col c2"><i></i><span>Couleur<br>2</span></div>
        <div class="swatches">
          <i style="background:#000"></i><i style="background:#7f7f7f"></i><i style="background:#880015"></i><i style="background:#ed1c24"></i><i style="background:#ff7f27"></i><i style="background:#fff200"></i><i style="background:#22b14c"></i><i style="background:#00a2e8"></i><i style="background:#3f48cc"></i><i style="background:#a349a4"></i>
          <i style="background:#fff"></i><i style="background:#c3c3c3"></i><i style="background:#b97a57"></i><i style="background:#ffaec9"></i><i style="background:#ffc90e"></i><i style="background:#efe4b0"></i><i style="background:#b5e61d"></i><i style="background:#99d9ea"></i><i style="background:#7092be"></i><i style="background:#c8bfe7"></i>
          <i class="nil"></i><i class="nil"></i><i class="nil"></i><i class="nil"></i><i class="nil"></i><i class="nil"></i><i class="nil"></i><i class="nil"></i><i class="nil"></i><i class="nil"></i>
        </div>
        <div class="big edit"><svg width="29" height="30" viewBox="0 0 29 30"><path d="M.5.5h28v28H.5z" fill="#f5f5f5" stroke="#999"/><path d="M2 2h25v25H2z" fill="url(#hue)"/><path d="M2 2h25v25H2z" fill="url(#fade)"/></svg><span>Modifier les<br>couleurs</span></div>
      </div>
      <h2>Couleurs</h2>
    </section>
  </div>
  <div class="canvas-area">
    <div class="canvas"><i class="dot"></i></div>
    <div class="vscroll"><b><svg width="7" height="5"><path d="M0 5h7L3.500 0z" fill="#333"/></svg></b><div class="vthumb"><em></em></div><b class="dn"><svg width="7" height="5"><path d="M0 0h7L3.500 5z" fill="#333"/></svg></b></div>
  </div>
  <div class="hscroll"><b><svg width="5" height="8"><path d="M5 0v8L0 4z" fill="#333"/></svg></b><div class="hthumb"><em></em></div><b class="rt"><svg width="5" height="8"><path d="M0 0v8l5-4z" fill="#333"/></svg></b></div>
  <footer class="status">
    <span class="s-pos"><svg width="12" height="12" viewBox="0 0 12 12"><path d="M6 0v12M0 6h12M4.500 2L6 .5 7.500 2M4.500 10L6 11.500 7.500 10M2 4.500L.5 6 2 7.500M10 4.500L11.500 6 10 7.500" fill="none" stroke="#1e395b"/></svg></span>
    <span class="s-sel"><svg width="14" height="13" viewBox="0 0 14 13"><path d="M4.500.5h8v7h-8z" fill="none" stroke="#1e395b" stroke-dasharray="2 1"/><path d="M1.500 1v7M0 2.500L1.500 1 3 2.500M4 10.500h8M10.500 9l1.500 1.500L10.500 12" fill="none" stroke="#1e395b"/></svg></span>
    <span class="s-size"><svg width="14" height="13" viewBox="0 0 14 13"><path d="M4.500.5h8v7h-8z" fill="none" stroke="#1e395b"/><path d="M1.500 1v7M0 2.500L1.500 1 3 2.500M4 10.500h8M10.500 9l1.500 1.500L10.500 12" fill="none" stroke="#1e395b"/></svg>3840 × 1080px</span>
    <span class="s-rest"></span>
    <span class="zoom"><span class="pct">100 %</span><svg width="16" height="16" viewBox="0 0 16 16"><circle cx="8" cy="8" r="7.300" fill="#fafafa" stroke="#666"/><path d="M4 8h8" stroke="#444" stroke-width="2"/></svg><svg class="slider" width="84" height="16" viewBox="0 0 84 16"><path d="M0 6.500h84" stroke="#9a9a9a"/><path d="M0 7.500h84" stroke="#fff"/><path d="M38.500.5h8v11l-4 4-4-4z" fill="#f2f2f2" stroke="#777"/></svg><svg width="16" height="16" viewBox="0 0 16 16"><circle cx="8" cy="8" r="7.300" fill="#fafafa" stroke="#666"/><path d="M4 8h8M8 4v8" stroke="#444" stroke-width="2"/></svg></span>
  </footer>
</div>
</div>
</body>
</html>
```
FILE: styles.css
```css
* { box-sizing: border-box; }
body { margin: 0; font: 12px "Liberation Sans", Arial, sans-serif; color: #333; white-space: nowrap; overflow: hidden; }
.defs { position: absolute; }
svg { display: block; flex: none; }
i, em { font-style: normal; }
.desktop { display: flex; width: 3840px; height: 1080px; }
.left-screen { width: 1920px; display: flex; flex-direction: column; background: #eee; flex: none; }

/* title bars */
.jm-title, .p-title { height: 22px; flex: none; display: flex; align-items: center; position: relative; border-bottom: 1px solid #54704f; overflow: hidden; font-family: "Open Sans", "Noto Sans", sans-serif; color: #000; }
.jm-title { background: linear-gradient(170deg, #a9d79f, #b6e2ac 30%, #abdaa3 55%, #b5e2ad 75%, #add8a5); font-size: 12px; }
.jm-title .app { margin-left: 1px; }
.title-text { margin-left: 8px; z-index: 1; letter-spacing: -.26px; background: rgba(225,245,220,.55); box-shadow: 0 0 6px 5px rgba(225,245,220,.55); line-height: 14px; }
.blur-items { position: absolute; left: 704px; top: 9px; display: flex; filter: blur(3px); }
.blur-items .b1 { width: 26px; height: 16px; margin-right: 50px; background: #b9cf6c; }
.blur-items .b2 { width: 40px; height: 14px; margin: 7px 0 0 -50px; background: #35a070; }
.blur-items .b3 { width: 190px; height: 6px; margin: 11px 0 0 30px; background: repeating-linear-gradient(90deg, #7ba275 0 12px, transparent 12px 26px); }
.winbtns { margin-left: auto; margin-right: 3px; align-self: flex-start; display: flex; height: 18px; border: 1px solid #4f6b4c; border-top: 0; border-radius: 0 0 5px 5px; overflow: hidden; z-index: 1; }
.wb { width: 27px; display: flex; align-items: center; justify-content: center; border-right: 1px solid #5b7a58; background: linear-gradient(#cde7c9, #b9d6b4 45%, #88a684 50%, #a9cda4); }
.wb:first-child svg { margin-top: 5px; }
.wb.close { width: 47px; border: 0; background: linear-gradient(#e39d8c, #d1664b 45%, #b5301a 50%, #d0553a); }
.glass { border-color: #7fae78; }
.glass .wb { background: #c1f6b5; border-color: #8fc087; width: 28px; }
.glass .wb.close { width: 46px; background: #c1f6b5; }

/* menu and toolbar */
.menubar { height: 23px; flex: none; display: flex; gap: 12px; padding-left: 6px; align-items: center; font-weight: bold; background: linear-gradient(#fff, #dadada); border-bottom: 1px solid #c5c5c5; }
.toolbar { height: 38px; flex: none; display: flex; justify-content: space-between; }
.tools { display: flex; gap: 11px; padding: 1px 3px 3px 2px; height: 37px; border-bottom: 1px solid #c5c5c5; background: linear-gradient(#fff, #dadada); }
.tgroup { display: flex; gap: 1px; }
.tools button { width: 33px; height: 33px; padding: 0; display: flex; align-items: center; justify-content: center; background: #eee; border: 1px solid #8a8a8a; box-shadow: 1px 1px #fff; }
.tools button svg { width: 22px; height: 22px; font-family: "Liberation Sans", sans-serif; }
.tools button.off { border-color: #ccc; }
.run-status { display: flex; align-items: center; font-weight: bold; height: 38px; padding-right: 3px; font-size: 12px; }
.timer { width: 52px; height: 20px; line-height: 20px; padding-left: 1px; border: 1px solid #fff; border-top: 2px solid #808080; border-left-color: #808080; letter-spacing: .1px; }
.errs { display: flex; align-items: center; gap: 4px; margin-left: 20px; }
.threads { margin: 0 13px 0 24px; }

/* tree */
.workarea { flex: 1; display: flex; min-height: 0; margin-bottom: 2px; }
.tree { width: 436px; flex: none; background: linear-gradient(#b8cfe5, #b8cfe5) 7px 19px / 1px 390px no-repeat #fff; border: 2px solid #7a8a99; border-width: 2px 1px 1px 2px; letter-spacing: .07px; }
.lvl1 { padding-left: 20px; }
.lvl2 { padding-left: 20px; background: linear-gradient(#b8cfe5, #b8cfe5) 27px 0 / 1px 352px no-repeat; }
.row { height: 19px; display: flex; align-items: center; }
.row svg { width: 20px; height: 19px; }
.row span { margin-left: 3px; }
.row.airy { letter-spacing: .22px; }
.row .sel { margin-left: 2px; height: 19px; line-height: 17px; border: 1px solid #6382bf; background: #b8cfe5; padding-right: 2px; }
.splitter { width: 9px; flex: none; margin: 4px 0; background: radial-gradient(circle at 1px 1px, #8794a2 .9px, transparent 1px) 2px 0 / 4px 4px; }
.panel { flex: 1; border: 1px solid #7a8a99; border-width: 2px 1px 1px 2px; margin-right: 2px; padding: 0 11px 0 10px; }
.panel h1 { margin: 0; height: 36px; line-height: 44px; font-size: 16px; letter-spacing: .05px; }
.namebox { height: 44px; border: 1px solid #999; box-shadow: 1px 1px #fff; padding: 1px 0 0 1px; }
.nrow { display: flex; height: 20px; align-items: center; padding-right: 2px; }
.crow { display: flex; height: 16px; margin-top: 5px; align-items: center; }
.crow label { width: 90px; flex: none; }
.plain { flex: 1; background: #fff; height: 16px; }
label, legend, .radios, .chk { font-weight: bold; }
.field { flex: 1; height: 100%; display: flex; align-items: center; background: #fff; border: 1px solid #7a8a99; box-shadow: 1px 1px #fff; padding: 1px 0 0 1px; }
.field.dis { border-color: #b8cfe5; color: #b8cfe5; box-shadow: none; letter-spacing: .17px; }
.l-nom { width: 37px; }
fieldset { margin: 0 1px 0 2px; padding: 0 3px; border: 1px solid #999; min-width: 0; filter: drop-shadow(1px 1px 0 #fff); }
legend { line-height: 14px; padding: 0 2px; margin-left: 1px; letter-spacing: -.08px; position: relative; top: 1px; }
.action { margin-top: 2px; height: 54px; border-color: #b8cfe5; filter: none; }
.action legend { letter-spacing: -.15px; }
.action .radios { height: 41px; }
.radios { display: flex; align-items: center; padding-left: 381px; }
.radios span { display: flex; align-items: center; gap: 5px; }
.radios i { width: 12px; height: 12px; border: 1px solid #7a8a99; border-radius: 50%; background: linear-gradient(#fff, #c9dbed); display: flex; }
.radios .on::after { content: ""; width: 6px; height: 6px; border-radius: 50%; background: #333; margin: 2px; }
.r1 { width: 85px; } .r2 { width: 187px; } .r3 { width: 108px; } .r4 { width: 109px; }
.props { margin-top: 7px; height: 153px; margin-right: 2px; padding-top: 4px; }
.config { margin-top: 9px; height: 115px; margin-right: 2px; padding-top: 3px; }
.frow { display: flex; align-items: center; height: 20px; margin-bottom: 5px; }
.frow.tall { height: 24px; margin-bottom: 3px; }
.frow label { flex: none; letter-spacing: -.06px; padding-top: 1px; }
.l-users { width: 179px; } .l-ramp { width: 252px; } .l-loop { width: 127px; }
.l-dur { width: 112px; } .l-del { width: 206px; } .l-start { width: 170px; } .l-end { width: 121px; }
.chk { display: flex; align-items: center; gap: 4px; }
.chk i { width: 13px; height: 13px; border: 1px solid #7a8a99; background: linear-gradient(#fff, #b8cfe5); }
.inf { width: 53px; flex: none; }
.delay { height: 29px; padding-left: 4px; }
.sched { height: 28px; padding-left: 4px; }

/* taskbar */
.taskbar { height: 40px; flex: none; display: flex; align-items: center; border-top: 1px solid #1c241b; background: linear-gradient(90deg, #87a881 0, #87a881 50px, #afd9a8 130px, #b2dfab 700px, #a6d49f 900px, #b3dfab 1300px, #b5e4ae 1585px, #86a881 1625px, #86a881 1830px, #8bb286); }
.start-orb { margin-left: 8px; }
.ie { margin: 0 14px 0 27px; }
.tb { width: 59px; height: 39px; margin-right: 3px; border: 1px solid #4f6b4b; border-radius: 3px; background: linear-gradient(135deg, #dcefd8, #c0e5ba 45%, #b7e0b0); box-shadow: inset 0 0 0 1px rgba(255,255,255,.6); display: flex; align-items: center; justify-content: center; flex: none; }
.explorer { width: 52px; margin-right: 0; }
.cmd { width: 55px; margin-right: 0; }
.tb.act { background: linear-gradient(135deg, #f4fbf2, #dcf1d8); }
.stack { width: 4px; height: 39px; border: 1px solid #5d7b58; border-left: 0; border-radius: 0 3px 3px 0; flex: none; }
.stack.end { margin-right: 3px; }
.mono { font-family: "Liberation Mono", monospace; font-weight: bold; }
.tray { margin-left: auto; display: flex; align-items: center; height: 39px; color: #fff; font: 12px "Open Sans", "Noto Sans", sans-serif; }
.lang { margin: -6px 17px 0 0; }
.ticons { display: flex; gap: 8px; }
.ticons svg { width: 16px; height: 17px; }
.clock { display: flex; flex-direction: column; align-items: center; width: 87px; font-size: 11.500px; line-height: 17px; letter-spacing: -.3px; margin-top: -1px; }
.peek { width: 15px; height: 39px; border: 1px solid #5f7f5b; background: linear-gradient(135deg, #c7e0c3, #7da179 50%, #a5cb9f); }

/* paint */
.paint { width: 1920px; flex: none; display: flex; flex-direction: column; background: #c5cfe1; font-family: "Open Sans", "Noto Sans", sans-serif; color: #1e395b; }
.p-title { background: linear-gradient(170deg, #bfffae, #a9f598 20%, #b9fcaa 60%, #adf79b 62%, #baffab 70%, #a9f499 72%, #b9ffab 80%); font-size: 12px; }
.p-title > svg { z-index: 1; }
.ghost-tabs { position: absolute; left: 40px; top: -3px; display: flex; gap: 8px; filter: blur(3px); }
.ghost-tabs i { width: 185px; height: 26px; background: #a8d69b; display: flex; align-items: center; justify-content: center; }
.ghost-tabs s { width: 130px; height: 7px; margin-top: 10px; background: repeating-linear-gradient(90deg, #84ae7a 0 28px, #9bc98e 30px 34px); }
.bar { width: 1px; height: 12px; background: #7d9c78; z-index: 1; }
.d1 { margin: 0 10px 0 7px; }
.q2 { margin-left: 7px; } .q3 { margin-left: 6px; } .q4 { margin-left: 8px; } .q5 { margin-left: 8px; }
.d2 { margin: 0 5px 0 10px; }
.p-name { z-index: 1; letter-spacing: -.35px; background: rgba(220,245,212,.4); box-shadow: 0 0 6px 5px rgba(220,245,212,.4); line-height: 14px; }
.tabs { height: 24px; flex: none; display: flex; align-items: flex-end; background: #dfe9f5; border-bottom: 1px solid #b3c4d8; font-size: 12px; }
.filetab { width: 56px; height: 22px; display: flex; gap: 5px; align-items: center; justify-content: center; background: linear-gradient(#3f7ac0, #2a62aa 45%, #153f86 50%, #3f8fd6); border: 1px solid #1b4486; border-bottom: 0; }
.tab { margin: 0 0 -1px 2px; width: 60px; height: 23px; line-height: 23px; text-align: center; background: #f8fbff; border: 1px solid #b5c6dc; border-bottom: 0; border-radius: 3px 3px 0 0; letter-spacing: -.3px; }
.tab2 { margin-left: 16px; line-height: 23px; letter-spacing: -.35px; }
.help { margin: 0 4px 5px auto; font-family: "Liberation Sans", sans-serif; }
.ribbon { height: 92px; flex: none; display: flex; background: linear-gradient(#fafdff, #eef4fe 18px, #e4eef8 21px, #dbe5f3 54px, #dbe7f5); border-bottom: 1px solid #9aaec6; font-size: 12px; letter-spacing: -.3px; }
section { flex: none; padding-top: 4px; background: linear-gradient(#a9bdd6, #a9bdd6) right 6px / 1px 77px no-repeat; }
.gbody { height: 66px; display: flex; }
h2 { margin: 4px 0 0; font-size: 12px; font-weight: normal; line-height: 16px; text-align: center; color: #6b7f9d; }
.g1 { width: 119px; } .g2 { width: 190px; } .g3 { width: 79px; } .g4 { width: 61px; } .g5 { width: 271px; } .g6 { width: 53px; } .g7 { width: 389px; }
.big { display: flex; flex-direction: column; align-items: center; height: 66px; padding-top: 3px; }
.big > svg:first-child { margin-bottom: auto; }
.big span { line-height: 14px; text-align: center; }
.big .ar { margin: 3px 0 7px; }
.ar { width: 6px; height: 4px; color: #44597a; }
.w52 { width: 52px; } .w60 { width: 60px; } .w50 { width: 50px; }
.sel69 { width: 69px; margin-left: 4px; padding-top: 6px; border: 1px solid #c29b3c; border-radius: 2px; background: linear-gradient(#fbd49b, #fdc777 36px, #d69a38 36px, #fdc160 37px, #ffd885); }
.list { display: flex; flex-direction: column; margin-left: 5px; }
.clip { margin-left: 0; }
.li { height: 22px; display: flex; align-items: center; gap: 3px; }
.li .ar { margin-left: 2px; }
.clip .li { gap: 2px; }
.dim { color: #8d97a3; }
.dim .ar { color: #a0aab8; }
.g3 .gbody { flex-direction: column; gap: 8px; padding: 8px 0 0 4px; }
.tbox { width: 69px; height: 21px; display: flex; border: 1px solid #adbfd8; border-radius: 2px; background: #eef4fb; }
.tbox b { flex: 1; display: flex; align-items: center; justify-content: center; border-right: 1px solid #c9d6e7; }
.tbox b:last-child { border: 0; }
.tbox svg { width: 17px; height: 17px; }
.tbox em { font: bold 18px "Liberation Serif", serif; }
.shapes { width: 157px; height: 60px; margin: 3px 0 0 6px; border: 1px solid #a9bcd8; background: #f1f6fc; display: flex; }
.grid { flex: 1; display: grid; grid-template-columns: repeat(7, 20px); grid-template-rows: repeat(3, 19.500px); place-items: center; }
.grid svg { width: 15px; height: 15px; fill: #e8f3fc; stroke: #1f68a6; stroke-width: 1.200; }
.sc { width: 14px; display: flex; flex-direction: column; border-left: 1px solid #bccbe0; background: #e3ecf7; }
.sc b { flex: 1; display: flex; flex-direction: column; align-items: center; justify-content: center; }
.sc .dm svg { opacity: .5; }
.up { transform: rotate(180deg); }
.more::before { content: ""; width: 7px; height: 1px; background: #33486a; margin-bottom: 2px; }
.outl { margin-left: 6px; }
.g6 .big { padding-top: 4px; }
.col { width: 46px; height: 66px; margin-left: 5px; display: flex; flex-direction: column; align-items: center; padding-top: 2px; line-height: 13px; text-align: center; }
.col span { margin-top: auto; }
.c1 { border: 1px solid #c29b3c; border-radius: 2px; background: linear-gradient(#fbd49b, #fdc777 26px, #fdc160 26px, #ffd885); }
.c2 { margin: 0 1px 0 0; padding: 7px 0 1px; }
.col i { width: 32px; height: 32px; border: 1px solid #808080; background: #000; box-shadow: inset 0 0 0 1px #ffd9a0; }
.c2 i { width: 24px; height: 24px; background: #fff; box-shadow: none; }
.swatches { display: grid; grid-template-columns: repeat(10, 20px); grid-template-rows: repeat(3, 20px); gap: 2px; padding-top: 1px; }
.swatches i { border: 1px solid #a0a0a0; box-shadow: inset 0 0 0 1px #fff; }
.swatches .nil { box-shadow: none; }
.edit { width: 68px; padding-top: 4px; }
.edit span { line-height: 13px; }

.canvas-area { flex: 1; display: flex; min-height: 0; }
.canvas { flex: 1; margin: 5px 1px 0 5px; background: #fff; position: relative; }
.dot { position: absolute; left: 704px; top: 705px; width: 4px; height: 1px; background: #333; }
.vscroll { width: 16px; background: #efefef; display: flex; flex-direction: column; }
.vscroll b, .hscroll b { width: 16px; height: 17px; display: flex; align-items: center; justify-content: center; flex: none; }
.vthumb { height: 708px; border: 1px solid #979797; border-radius: 2px; background: linear-gradient(90deg, #f5f5f5, #e3e3e3 50%, #cfcfcf); display: flex; align-items: center; justify-content: center; }
.vthumb em { width: 8px; height: 7px; background: repeating-linear-gradient(#666 0 1px, #eee 1px 3px); }
.dn { margin-top: auto; }
.hscroll { height: 17px; flex: none; display: flex; background: #ececec; padding-right: 16px; }
.hthumb { width: 921px; margin-left: 3px; height: 16px; border: 1px solid #979797; border-radius: 2px; background: linear-gradient(#f5f5f5, #e3e3e3 45%, #cfcfcf 50%, #d8d8d8); display: flex; align-items: center; justify-content: center; }
.hthumb em { width: 7px; height: 8px; background: repeating-linear-gradient(90deg, #666 0 1px, #eee 1px 3px); }
.rt { margin-left: auto; }
.status { height: 26px; flex: none; display: flex; align-items: stretch; border-top: 1px solid #8b8b8b; background: #f0eceb; color: #1a1a1a; font-size: 12px; letter-spacing: -.6px; }
.status > span { display: flex; align-items: center; border-right: 1px solid #d2d0cf; }
.s-pos { width: 156px; padding-left: 3px; }
.s-sel { width: 157px; padding-left: 6px; }
.s-size { width: 155px; padding-left: 5px; gap: 5px; }
.s-rest { flex: 1; }
.status .zoom { width: 198px; border: 0; padding-left: 17px; background: #f0f0f0; }
.pct { width: 39px; letter-spacing: -.1px; }
.slider { margin: 0 12px 0 10px; }
```
